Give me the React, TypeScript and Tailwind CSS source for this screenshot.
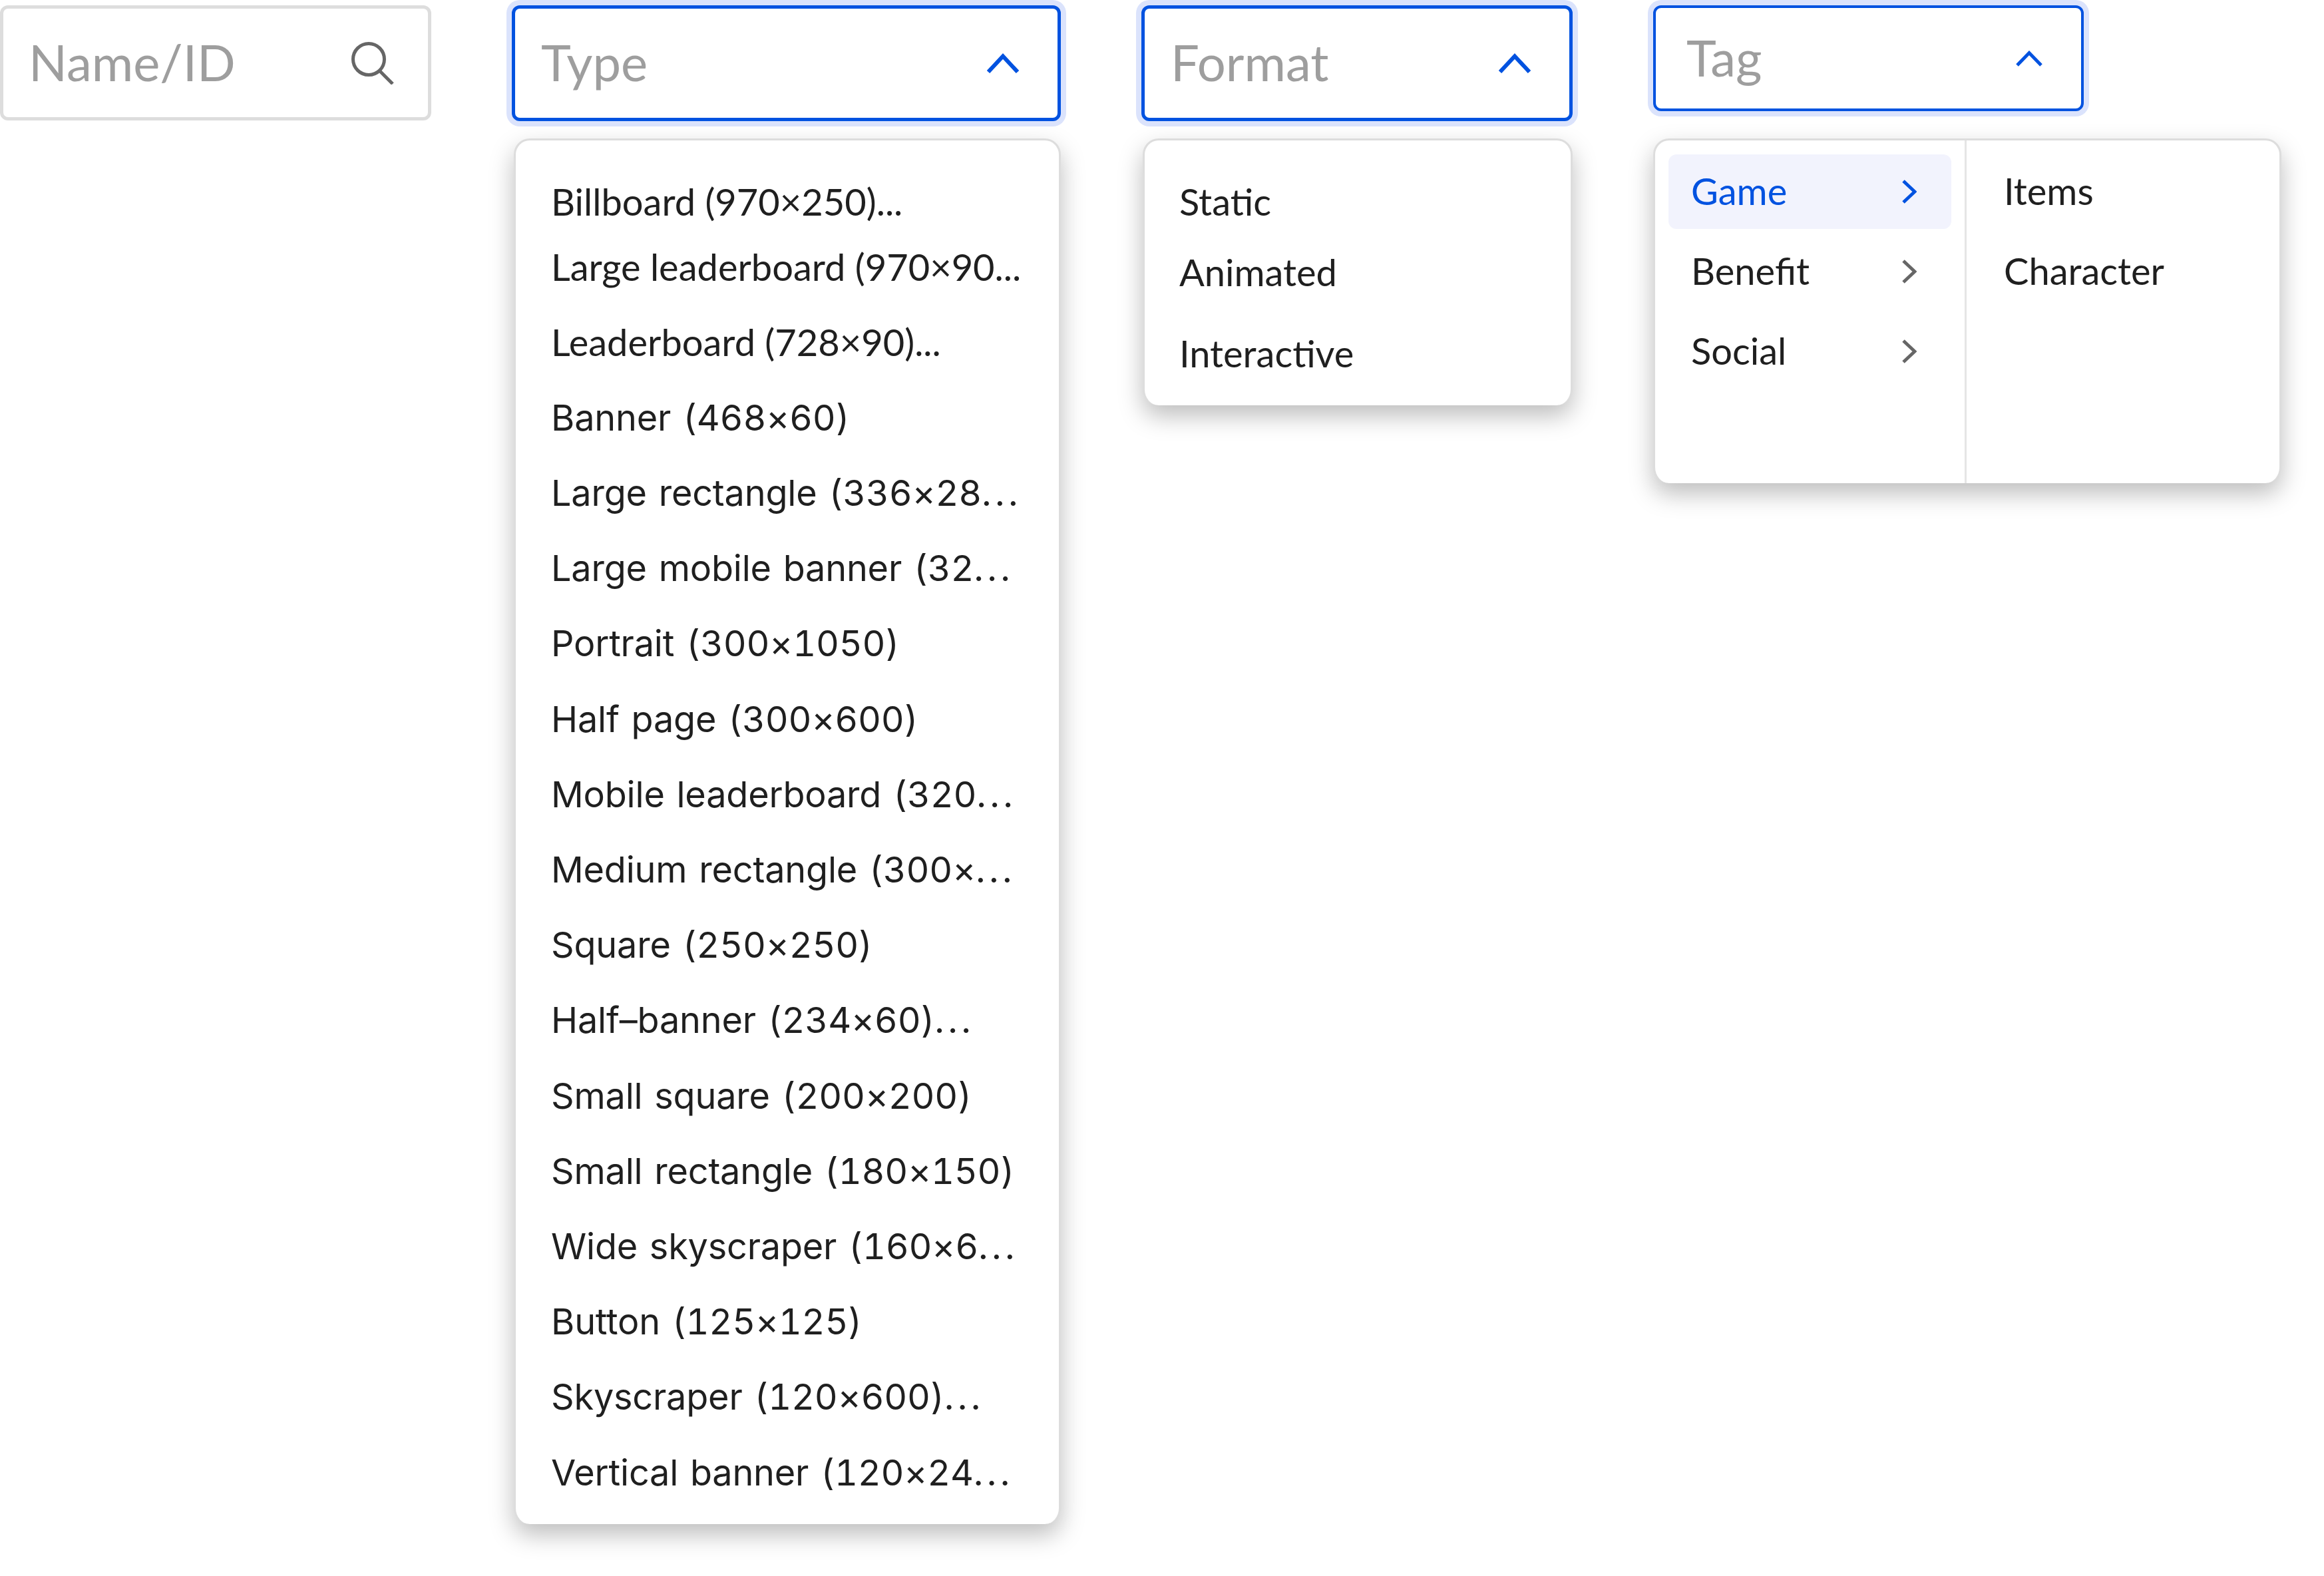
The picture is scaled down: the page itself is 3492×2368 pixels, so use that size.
const typeRows = [
  { label: 'Billboard (970×250)...', alt: false },
  { label: 'Large leaderboard (970×90...', alt: false },
  { label: 'Leaderboard (728×90)...', alt: false },
  { label: 'Banner (468×60)', alt: true },
  { label: 'Large rectangle (336×28...', alt: true },
  { label: 'Large mobile banner (32...', alt: true },
  { label: 'Portrait (300×1050)', alt: true },
  { label: 'Half page (300×600)', alt: true },
  { label: 'Mobile leaderboard (320...', alt: true },
  { label: 'Medium rectangle (300×...', alt: true },
  { label: 'Square (250×250)', alt: true },
  { label: 'Half–banner (234×60)...', alt: true },
  { label: 'Small square (200×200)', alt: true },
  { label: 'Small rectangle (180×150)', alt: true },
  { label: 'Wide skyscraper (160×6...', alt: true },
  { label: 'Button (125×125)', alt: true },
  { label: 'Skyscraper (120×600)...', alt: true },
  { label: 'Vertical banner (120×24...', alt: true },
];

function ChevronUpIcon({ small }: { small?: boolean }) {
  return small ? (
    <svg width="40" height="24" viewBox="0 0 40 24" fill="none" stroke="#0052e0" strokeWidth="5">
      <path d="M2 22 L20 3.5 L38 22" />
    </svg>
  ) : (
    <svg width="48" height="30" viewBox="0 0 48 30" fill="none" stroke="#0052e0" strokeWidth="6">
      <path d="M2 28 L24 4.5 L46 28" />
    </svg>
  );
}

function ChevronRightIcon({ active }: { active?: boolean }) {
  return (
    <svg width="22" height="36" viewBox="0 0 22 36" fill="none" stroke={active ? '#0052e0' : '#666666'} strokeWidth="5">
      <path d="M2 2 L19 18 L2 34" />
    </svg>
  );
}

function SelectBox({ label, small }: { label: string; small?: boolean }) {
  return (
    <div
      className={`flex items-center justify-between rounded-[12px] bg-white shadow-[0_0_0_8px_#dbe3fc] ${
        small ? 'h-[159px] border-4 border-[#0052e0] pl-[46px] pr-[58px]' : 'h-[174px] border-[5px] border-[#0052e0] pl-[39px] pr-[58px]'
      }`}
    >
      <span className="-mt-[4px] text-[76px] text-[#9e9e9e]">{label}</span>
      <ChevronUpIcon small={small} />
    </div>
  );
}

function TagRow({ label, active }: { label: string; active?: boolean }) {
  return (
    <div className={`flex h-[112px] items-center justify-between rounded-[12px] pl-[34px] pr-[52px] ${active ? 'bg-[#f2f3fd] text-[#0052e0]' : 'text-[#1f1f1f]'}`}>
      <span className="-mt-[3px]">{label}</span>
      <ChevronRightIcon active={active} />
    </div>
  );
}

function TypeRowLabel({ label }: { label: string }) {
  if (!label.endsWith('...')) return <>{label}</>;
  return (
    <>
      {label.slice(0, -3)}
      <span className="tracking-[5.5px]">...</span>
    </>
  );
}

export default function App() {
  return (
    <div className="flex h-[2368px] w-[3492px] items-start bg-white pt-[8px] font-['Lato',sans-serif] text-[56px] text-[#1f1f1f]">
      <div className="flex h-[173px] w-[648px] shrink-0 items-center justify-between rounded-[12px] border-[5px] border-[#dddddd] pl-[38px] pr-[50px]">
        <span className="-mt-[4px] text-[76px] text-[#9e9e9e]">Name/ID</span>
        <svg width="65" height="64" viewBox="0 0 65 64" fill="none" stroke="#666666" strokeWidth="5">
          <circle cx="26" cy="26" r="23.5" />
          <path d="M42 43 L62 63" />
        </svg>
      </div>

      <div className="ml-[121px] flex w-[825px] shrink-0 flex-col">
        <SelectBox label="Type" />
        <div className="mt-[26px] ml-[3px] flex h-[2082px] flex-col gap-[33.2px] rounded-[24px] border-[3px] border-[#dddddd] border-b-0 bg-white pt-[52px] pl-[53px] shadow-[0_16px_36px_rgba(0,0,0,0.26)]">
          {typeRows.map((row, i) => (
            <div
              key={row.label}
              className={`flex h-[80px] shrink-0 items-center whitespace-pre ${row.alt ? "font-['Inter',sans-serif] text-[54px] tracking-[-0.2px] tabular-nums [word-spacing:3.5px]" : ''} ${i === 1 ? '-mt-[15.2px]' : ''}`}
            >
              {row.alt ? <span><TypeRowLabel label={row.label} /></span> : row.label}
            </div>
          ))}
        </div>
      </div>

      <div className="ml-[121px] flex w-[648px] shrink-0 flex-col">
        <SelectBox label="Format" />
        <div className="mt-[26px] ml-[2px] flex h-[401px] flex-col rounded-[24px] border-[3px] border-[#dddddd] border-b-0 bg-white pt-[52px] pl-[52px] shadow-[0_16px_36px_rgba(0,0,0,0.26)]">
          <div className="flex h-[80px] items-center">Static</div>
          <div className="mt-[26px] flex h-[80px] items-center">Animated</div>
          <div className="mt-[42px] flex h-[80px] items-center">Interactive</div>
        </div>
      </div>

      <div className="ml-[121px] flex w-[944px] shrink-0 flex-col">
        <div className="w-[647px]">
          <SelectBox label="Tag" small />
        </div>
        <div className="mt-[41px] flex h-[518px] rounded-[24px] border-[3px] border-[#dddddd] border-b-0 bg-white shadow-[0_16px_36px_rgba(0,0,0,0.26)]">
          <div className="flex w-[468px] flex-col gap-2 border-r-[3px] border-[#e5e5e5] pt-[21px] pl-[20px] pr-[20px]">
            <TagRow label="Game" active />
            <TagRow label="Benefit" />
            <TagRow label="Social" />
          </div>
          <div className="flex flex-col gap-2 pt-[21px] pl-[56px]">
            <div className="flex h-[112px] items-center pb-[3px]">Items</div>
            <div className="flex h-[112px] items-center pb-[3px]">Character</div>
          </div>
        </div>
      </div>
    </div>
  );
}
